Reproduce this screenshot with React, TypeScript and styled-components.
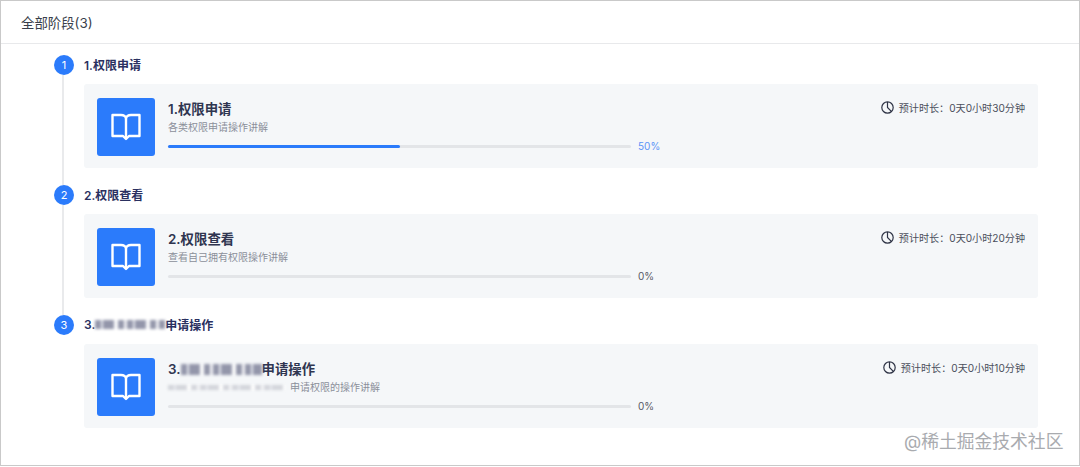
import React from 'react'
import styled, { createGlobalStyle } from 'styled-components'

const GlobalStyle = createGlobalStyle`
  html, body { margin: 0; padding: 0; background: #fff; }
  body { font-family: Inter, "Noto Sans CJK SC", sans-serif; }
`

const Frame = styled.div`
  position: relative;
  box-sizing: border-box;
  width: 1080px;
  height: 466px;
  background: #fff;
  border: 1px solid #c9c9c9;
  overflow: hidden;
`
const Header = styled.div`
  box-sizing: border-box;
  height: 43px;
  padding: 0 20px 1px;
  display: flex;
  align-items: center;
  font-size: 13.4px;
  color: #3a3f4b;
  border-bottom: 1px solid #e8e9eb;
`
const StageList = styled.div`
  padding: 11px 41px 0 53px;
  display: flex;
  flex-direction: column;
`
const Stage = styled.section`
  height: 130px;
  display: flex;
  flex-direction: column;
`
const StageHead = styled.div`
  height: 20px;
  display: flex;
  align-items: center;
  gap: 10px;
`
const Dot = styled.div`
  flex: none;
  width: 20px;
  height: 20px;
  border-radius: 50%;
  background: #2b7bfb;
  color: #fff;
  font-size: 11px;
  display: flex;
  align-items: center;
  justify-content: center;
`
const StageTitle = styled.div`
  margin-top: -2px;
  font-size: 12px;
  font-weight: 600;
  color: #2a3060;
  display: flex;
  align-items: center;
`
const StageBody = styled.div<{ $line: boolean }>`
  flex: 1;
  margin-left: 8px;
  padding: 9px 0 0 20px;
  border-left: 2px solid ${p => (p.$line ? '#e9eaec' : 'transparent')};
`
const Card = styled.div`
  box-sizing: border-box;
  height: 84px;
  padding: 14px 13px;
  display: flex;
  gap: 13px;
  background: #f5f7f9;
  border-radius: 3px;
`
const Cover = styled.div`
  flex: none;
  width: 58px;
  height: 58px;
  border-radius: 3px;
  background: #2b7bfb;
  display: flex;
  align-items: center;
  justify-content: center;
`
const Main = styled.div`
  flex: 1;
  min-width: 0;
`
const CardTop = styled.div`
  display: flex;
  justify-content: space-between;
`
const CardTitle = styled.div`
  margin-top: 2px;
  height: 18px;
  line-height: 18px;
  font-size: 13.4px;
  font-weight: 600;
  color: #2f3550;
  display: flex;
  align-items: center;
`
const CardSub = styled.div`
  margin-top: 2px;
  height: 15px;
  line-height: 15px;
  font-size: 10px;
  color: #8b8f99;
  display: flex;
  align-items: center;
`
const Duration = styled.div`
  display: flex;
  align-items: center;
  gap: 5px;
  height: 18px;
  font-size: 10.1px;
  color: #4b4f5c;
`
const ProgressRow = styled.div`
  margin-top: 5px;
  display: flex;
  align-items: center;
  gap: 7px;
`
const Track = styled.div`
  width: 463px;
  height: 3px;
  border-radius: 2px;
  background: #e3e5e8;
`
const Fill = styled.div`
  height: 100%;
  border-radius: 2px;
  background: #2b7bfb;
`
const Percent = styled.span<{ $active: boolean }>`
  font-size: 10px;
  color: ${p => (p.$active ? '#5b94f7' : '#555a66')};
`
// the source screenshot masks part of these names, so the smudge is drawn as blurred bands
const Mosaic = styled.span<{ $w: number; $h: number; $dark: string }>`
  display: inline-block;
  width: ${p => p.$w}px;
  height: ${p => p.$h}px;
  margin-right: ${p => (p.$w > 100 ? 5 : 0)}px;
  filter: blur(1.6px);
  background: repeating-linear-gradient(
    90deg,
    ${p => p.$dark} 0 6px,
    #e6e8ee 6px 8px,
    ${p => p.$dark} 8px 19px,
    #ffffff 19px 23px,
    ${p => p.$dark} 23px 29px,
    #f4f4f7 29px 32px
  );
`
const Watermark = styled.div`
  position: absolute;
  left: 903px;
  bottom: 12px;
  font-size: 17.8px;
  color: #a9abaf;
  text-shadow: 0 0 2px #fff;
`

const BookIcon = () => (
  <svg width="30" height="28" viewBox="0 0 30 28" fill="none" stroke="#fff" strokeWidth="2.4" strokeLinejoin="round">
    <path d="M1.500 2h8.500c2.800 0 5 1.500 5 4 0-2.500 2.200-4 5-4h8.500v21h-10.500l-3 3-3-3H1.500z" />
    <path d="M15 6v19" />
  </svg>
)

const ClockIcon = () => (
  <svg width="13" height="13" viewBox="0 0 13 13" fill="none" stroke="#2f3446" strokeWidth="1.200">
    <circle cx="6.500" cy="6.500" r="5.700" />
    <path d="M6.500 1v5.500l3.800 3.800" />
  </svg>
)

interface StageData {
  no: number
  head: React.ReactNode
  title: React.ReactNode
  sub: React.ReactNode
  time: string
  pct: number
}

const stages: StageData[] = [
  { no: 1, head: '1.权限申请', title: '1.权限申请', sub: '各类权限申请操作讲解', time: '预计时长：0天0小时30分钟', pct: 50 },
  { no: 2, head: '2.权限查看', title: '2.权限查看', sub: '查看自己拥有权限操作讲解', time: '预计时长：0天0小时20分钟', pct: 0 },
  {
    no: 3,
    head: <>3.<Mosaic $w={70} $h={9} $dark="#9396aa" />申请操作</>,
    title: <>3.<Mosaic $w={81} $h={11} $dark="#9396aa" />申请操作</>,
    sub: <><Mosaic $w={117} $h={5} $dark="#d2d4da" />申请权限的操作讲解</>,
    time: '预计时长：0天0小时10分钟',
    pct: 0,
  },
]

const App = () => (
  <Frame>
    <GlobalStyle />
    <Header>全部阶段(3)</Header>
    <StageList>
      {stages.map((s, i) => (
        <Stage key={s.no}>
          <StageHead>
            <Dot>{s.no}</Dot>
            <StageTitle>{s.head}</StageTitle>
          </StageHead>
          <StageBody $line={i < stages.length - 1}>
            <Card>
              <Cover><BookIcon /></Cover>
              <Main>
                <CardTop>
                  <CardTitle>{s.title}</CardTitle>
                  <Duration><ClockIcon />{s.time}</Duration>
                </CardTop>
                <CardSub>{s.sub}</CardSub>
                <ProgressRow>
                  <Track><Fill style={{ width: `${s.pct}%` }} /></Track>
                  <Percent $active={s.pct > 0}>{s.pct}%</Percent>
                </ProgressRow>
              </Main>
            </Card>
          </StageBody>
        </Stage>
      ))}
    </StageList>
    <Watermark>@稀土掘金技术社区</Watermark>
  </Frame>
)

export default App
